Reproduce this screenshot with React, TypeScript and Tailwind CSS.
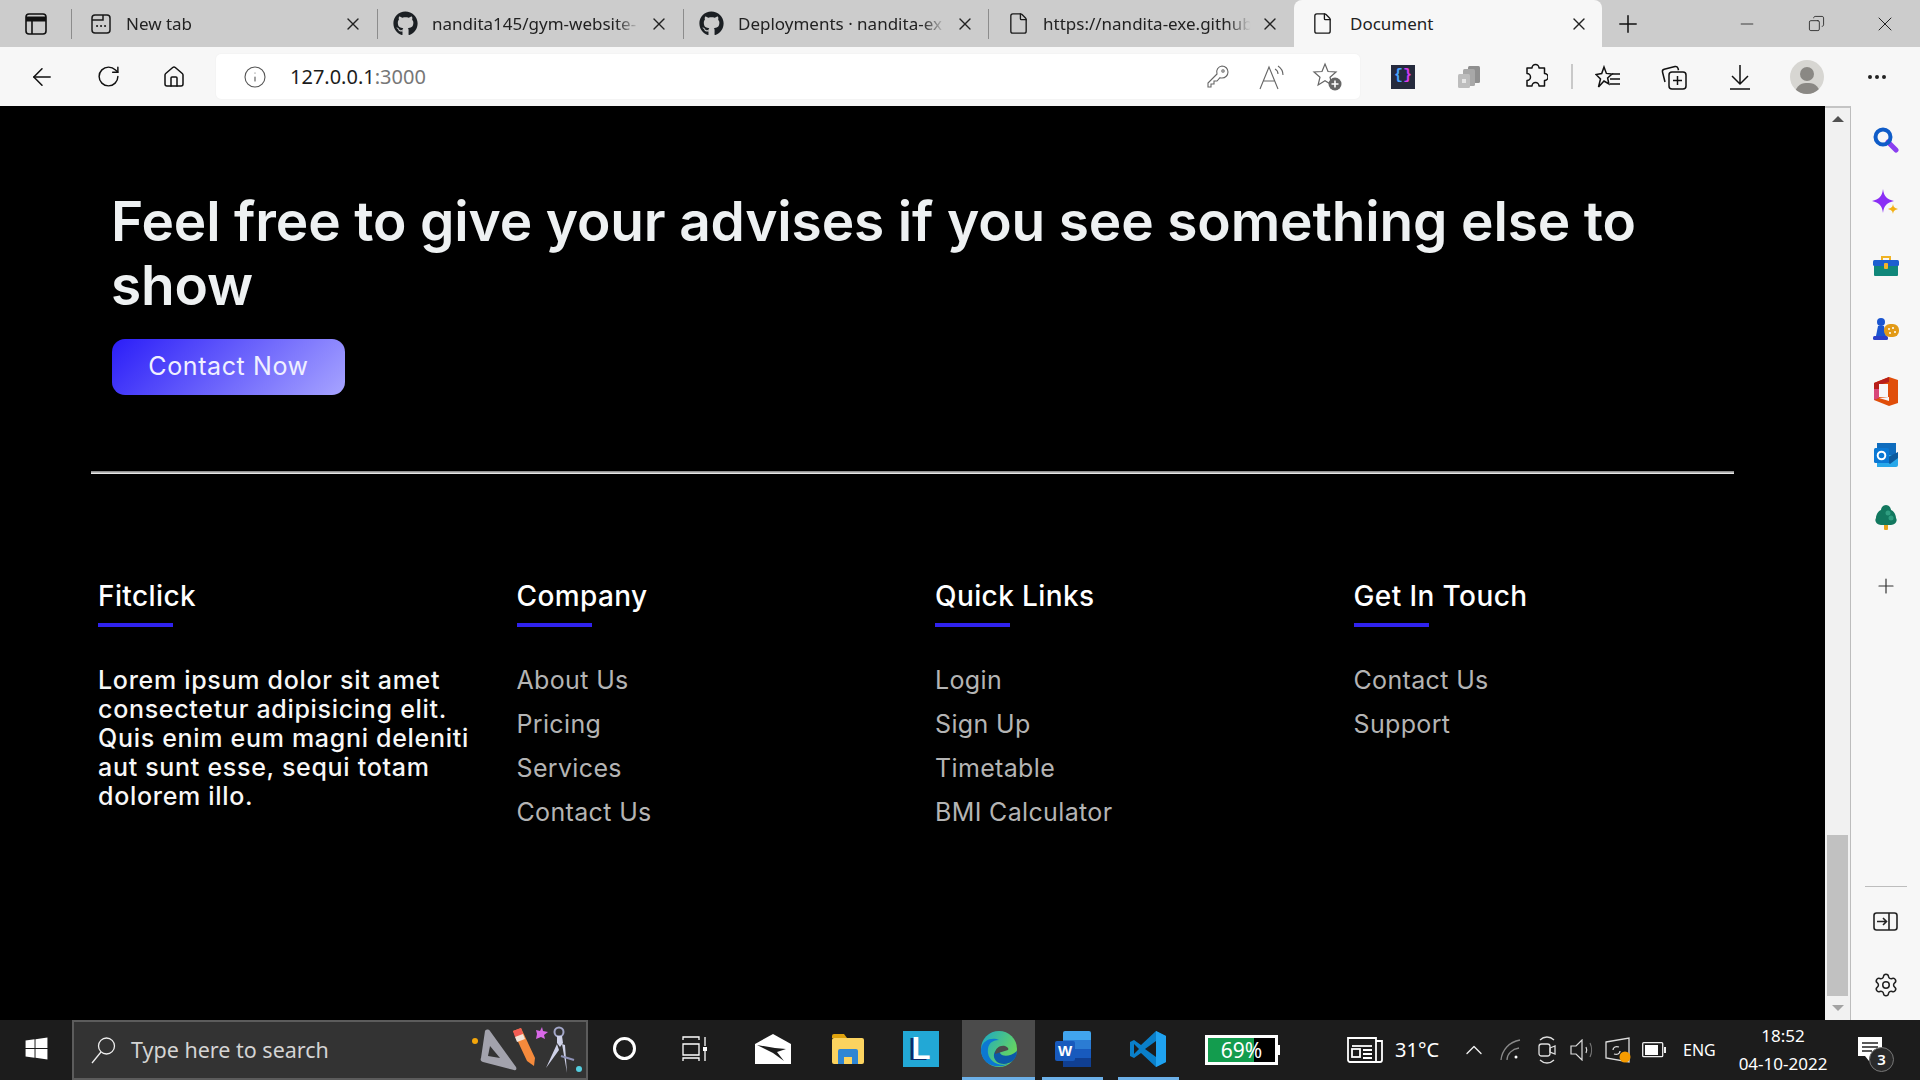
import { ReactNode } from 'react';
import { FaGithub, FaWindows } from 'react-icons/fa';
import {
  ArrowLeft, RotateCw, Home, Info, Plus, Minus, X, Copy, Settings, ChevronUp, File, Ellipsis,
} from 'lucide-react';

const tabs = [
  { id: 'new', title: 'New tab', width: 'w-[306px]' },
  { id: 'gym', title: 'nandita145/gym-website-', width: 'w-[306px]' },
  { id: 'dep', title: 'Deployments · nandita-ex', width: 'w-[305px]' },
  { id: 'url', title: 'https://nandita-exe.github', width: 'w-[306px]' },
];

const footerColumns = [
  { title: 'Company', links: ['About Us', 'Pricing', 'Services', 'Contact Us'] },
  { title: 'Quick Links', links: ['Login', 'Sign Up', 'Timetable', 'BMI Calculator'] },
  { title: 'Get In Touch', links: ['Contact Us', 'Support'] },
];

function TabIcon({ id }: { id: string }) {
  if (id === 'new') {
    return (
      <svg width="22" height="22" viewBox="0 0 22 22" fill="none" stroke="#1a1a1a" strokeWidth="1.5">
        <rect x="2" y="2" width="18" height="18" rx="3" />
        <path d="M2 7h11V2" />
        <path d="M7 13h.1M11 13h.1M15 13h.1" strokeWidth="2" strokeLinecap="round" />
      </svg>
    );
  }
  if (id === 'gym' || id === 'dep') return <FaGithub size={25} color="#1b1f23" className="-translate-x-[2px]" />;
  return <File size={23} strokeWidth={1.4} color="#1a1a1a" />;
}

function Tab({ id, title, width }: { id: string; title: string; width: string }) {
  return (
    <div className={`${width} flex h-[47px] items-center`}>
      <div className="h-[30px] w-px bg-[#8c8c8c]" />
      <div className="flex w-[28px] shrink-0 justify-end">
        <div className="w-[14px]" />
      </div>
      <div className="flex w-[26px] shrink-0 justify-center -ml-[12px] mr-[12px]">
        <TabIcon id={id} />
      </div>
      <span className="w-[214px] overflow-hidden whitespace-nowrap text-[17px] text-[#222] [mask-image:linear-gradient(to_right,black_86%,transparent_97%)]">
        {title}
      </span>
      <X size={20} strokeWidth={1.6} color="#222" className="ml-[3px] shrink-0" />
    </div>
  );
}

function TabStrip() {
  return (
    <div className="flex h-[47px] items-center bg-[#cccccc]">
      <div className="flex w-[71px] justify-center">
        <svg width="24" height="24" viewBox="0 0 24 24" fill="none" stroke="#111" strokeWidth="1.6">
          <rect x="2" y="2" width="20" height="20" rx="3" />
          <path d="M2 7h20" strokeWidth="5" />
          <path d="M8 8v14" />
        </svg>
      </div>
      {tabs.map((t) => (
        <Tab key={t.id} id={t.id} title={t.title} width={t.width} />
      ))}
      <div className="flex h-[47px] w-[308px] items-center rounded-t-[8px] bg-[#f7f7f7]">
        <div className="flex w-[56px] justify-center">
          <File size={23} strokeWidth={1.4} color="#1a1a1a" />
        </div>
        <span className="w-[222px] text-[17px] text-[#222]">Document</span>
        <X size={20} strokeWidth={1.6} color="#222" className="-ml-[3px]" />
      </div>
      <div className="flex w-[52px] justify-center">
        <Plus size={28} strokeWidth={1.3} color="#111" />
      </div>
      <div className="ml-[78px] flex w-[30px] justify-center">
        <Minus size={20} strokeWidth={1} color="#222" />
      </div>
      <div className="ml-[39px] flex w-[30px] justify-center">
        <Copy size={17} strokeWidth={1.2} color="#222" className="-scale-x-100" />
      </div>
      <div className="ml-[39px] flex w-[30px] justify-center">
        <X size={24} strokeWidth={1} color="#222" />
      </div>
    </div>
  );
}

function ToolSlot({ width, children }: { width: string; children: ReactNode }) {
  return <div className={`${width} flex shrink-0 items-center justify-center`}>{children}</div>;
}

function Toolbar() {
  return (
    <div className="flex h-[59px] items-center bg-[#f7f7f7]">
      <ToolSlot width="w-[84px]">
        <ArrowLeft size={28} strokeWidth={1.3} color="#111" />
      </ToolSlot>
      <ToolSlot width="w-[48px]">
        <RotateCw size={25} strokeWidth={1.4} color="#111" />
      </ToolSlot>
      <ToolSlot width="w-[84px]">
        <Home size={24} strokeWidth={1.5} color="#111" />
      </ToolSlot>
      <div className="flex h-[45px] w-[1144px] items-center rounded-[5px] bg-white shadow-[0_0_2px_rgba(0,0,0,0.05)]">
        <ToolSlot width="w-[78px]">
          <Info size={24} strokeWidth={1.1} color="#555" />
        </ToolSlot>
        <span className="-ml-[4px] w-[900px] text-[20px] text-[#1c1c1c]">
          127.0.0.1<span className="text-[#777]">:3000</span>
        </span>
        <ToolSlot width="w-[56px]">
          <svg width="24" height="25" viewBox="0 0 24 25" fill="none" stroke="#666" strokeWidth="1.1">
            <path d="M16 2a6 6 0 0 1 0 12 6 6 0 0 1-2-.3L11 17H8v3H5v3H2v-4l9-9a6 6 0 0 1 5-8z" />
            <circle cx="17" cy="7" r="1.2" />
          </svg>
        </ToolSlot>
        <ToolSlot width="w-[54px]">
          <svg width="30" height="28" viewBox="0 0 30 28" fill="none" stroke="#666" strokeWidth="1.1">
            <path d="M2 26 11 4l9 22M5 18h12" />
            <path d="M17 6c2 1 3 3 3 5M20 3c3 2 5 5 5 9" />
          </svg>
        </ToolSlot>
        <ToolSlot width="w-[54px]">
          <svg width="30" height="29" viewBox="0 0 30 29" fill="none">
            <path d="M13 2l3 7.500 8 .5-6 5.200 1.900 7.800L13 18.800 6.100 23 8 15.200 2 10l8-.5z" stroke="#666" strokeWidth="1.2" />
            <circle cx="23" cy="22" r="6.500" fill="#666" />
            <path d="M23 18.500v7M19.500 22h7" stroke="#fff" strokeWidth="1.600" />
          </svg>
        </ToolSlot>
      </div>
      <div className="w-[10px]" />
      <ToolSlot width="w-[66px]">
        <div className="flex h-[24px] w-[24px] items-center justify-center bg-[#252a3d] text-[15px] font-bold font-['Liberation_Mono',monospace]">
          <span className="text-[#4aa3ff]">{'{'}</span>
          <span className="text-[#d63cf0]">{'}'}</span>
        </div>
      </ToolSlot>
      <ToolSlot width="w-[66px]">
        <svg width="24" height="24" viewBox="0 0 24 24">
          <rect x="11" y="1" width="12" height="17" rx="1.5" fill="#8f8f8f" />
          <rect x="6" y="4" width="12" height="17" rx="1.5" fill="#a8a8a8" />
          <rect x="1" y="9" width="12" height="14" rx="1.5" fill="#bdbdbd" />
          <rect x="5" y="14" width="4" height="4" fill="#e6e6e6" />
        </svg>
      </ToolSlot>
      <ToolSlot width="w-[67px]">
        <svg width="25" height="27" viewBox="0 0 25 27" fill="none" stroke="#111" strokeWidth="1.500" strokeLinejoin="round">
          <path d="M9 5a3.500 3.500 0 0 1 7 0h5.500v5.500a3.500 3.500 0 0 1 0 7V23H16a3.500 3.500 0 0 0-7 0H4v-5.500a3.500 3.500 0 0 0 0-7V5z" />
        </svg>
      </ToolSlot>
      <div className="mx-[2px] h-[25px] w-[2px] bg-[#c9c9c9]" />
      <ToolSlot width="w-[66px]">
        <svg width="26" height="24" viewBox="0 0 26 24" fill="none" stroke="#111" strokeWidth="1.5">
          <path d="M9 2l2.4 6.4L17 9l-4.4 4 1.3 6L9 16l-5.500 6 2-8L1 9.500l5.700-1z" />
          <path d="M17 9h8M15 14h10M15 19h10" />
        </svg>
      </ToolSlot>
      <ToolSlot width="w-[66px]">
        <svg width="26" height="26" viewBox="0 0 26 26" fill="none" stroke="#111" strokeWidth="1.5">
          <path d="M4 18 1.500 8c-.3-1.300.4-2.500 1.700-2.800L14 2.500c1.300-.3 2.400.3 3 1.700l.5 2" />
          <rect x="8" y="8" width="17" height="17" rx="3" />
          <path d="M16.500 12v9M12 16.500h9" />
        </svg>
      </ToolSlot>
      <ToolSlot width="w-[66px]">
        <svg width="22" height="26" viewBox="0 0 22 26" fill="none" stroke="#111" strokeWidth="1.500">
          <path d="M11 1v19M3 12l8 8 8-8M1 25h20" />
        </svg>
      </ToolSlot>
      <ToolSlot width="w-[68px]">
        <div className="flex h-[34px] w-[34px] flex-col items-center justify-end overflow-hidden rounded-full bg-[#d7d6d2]">
          <div className="mb-[2px] h-[14px] w-[14px] rounded-full bg-[#8a8884]" />
          <div className="h-[11px] w-[25px] rounded-t-full bg-[#8a8884]" />
        </div>
      </ToolSlot>
      <ToolSlot width="w-[72px]">
        <Ellipsis size={24} strokeWidth={2} color="#222" />
      </ToolSlot>
    </div>
  );
}

function FooterHeading({ title }: { title: string }) {
  return (
    <div>
      <h3 className="text-[28px] leading-[36px] font-medium tracking-[0.4px] text-white">{title}</h3>
      <div className="mt-[9px] h-[4px] w-[75px] bg-[#2f22ee]" />
    </div>
  );
}

function Page() {
  return (
    <div className="h-[914px] w-[1825px] bg-black pt-[83px] font-['Inter',sans-serif]">
      <div className="pl-[111px]">
        <h1 className="w-[1600px] text-[55px] leading-[64px] font-semibold tracking-[-0.15px] text-[#eef1f2]">
          Feel free to give your advises if you see something else to
          <br />
          show
        </h1>
        <button className="ml-[1px] mt-[22px] h-[56px] w-[233px] rounded-[13px] bg-[linear-gradient(135deg,#2b1ef8,#a7a4ff)] text-[25px] font-normal tracking-[0.6px] text-[#f0f0ff]">
          Contact Now
        </button>
      </div>
      <div className="ml-[91px] mt-[76px] h-[3px] w-[1643px] border-t border-b border-t-[#8f8f8f] border-b-[#e8e8e8] bg-[#b5b5b5]" />
      <div className="ml-[98px] mt-[104px] grid w-[1674px] grid-cols-4">
        <div>
          <FooterHeading title="Fitclick" />
          <p className="mt-[39px] text-[25px] leading-[29px] font-medium tracking-[0.7px] text-[#f7f7f7]">
            Lorem ipsum dolor sit amet
            <br />
            consectetur adipisicing elit.
            <br />
            Quis enim eum magni deleniti
            <br />
            aut sunt esse, sequi totam
            <br />
            dolorem illo.
          </p>
        </div>
        {footerColumns.map((col) => (
          <div key={col.title}>
            <FooterHeading title={col.title} />
            <ul className="mt-[39px] flex flex-col gap-[15px]">
              {col.links.map((link) => (
                <li key={link} className="text-[25px] leading-[29px] tracking-[0.35px] text-[#b4b4b4]">
                  {link}
                </li>
              ))}
            </ul>
          </div>
        ))}
      </div>
    </div>
  );
}

function Scrollbar() {
  return (
    <div className="flex h-[914px] w-[26px] flex-col border-r border-t-2 border-r-[#bdbdbd] border-t-[#c4c4c4] bg-[#f1f1f1]">
      <div className="mt-[8px] h-0 w-0 self-center border-x-[6px] border-b-[6px] border-x-transparent border-b-[#505050]" />
      <div className="mx-[2px] mt-[713px] h-[161px] w-[21px] bg-[#c1c1c1]" />
      <div className="mt-[9px] h-0 w-0 self-center border-x-[6px] border-t-[6px] border-x-transparent border-t-[#a3a3a3]" />
    </div>
  );
}

function SideSlot({ children }: { children: ReactNode }) {
  return <div className="flex h-[63px] items-center justify-center">{children}</div>;
}

function SidePanel() {
  return (
    <div className="flex h-[914px] w-[69px] flex-col bg-[#f7f7f7] pt-[2px]">
      <SideSlot>
        <svg width="26" height="26" viewBox="0 0 26 26" fill="none">
          <path d="M15 15l8 8" stroke="#8a3ff0" strokeWidth="5" strokeLinecap="round" />
          <circle cx="10" cy="10" r="7.500" stroke="#0f5cc8" strokeWidth="4" />
        </svg>
      </SideSlot>
      <SideSlot>
        <svg width="28" height="28" viewBox="0 0 28 28">
          <path d="M11 0c1 8 4 10 11 12-7 2-10 4-11 12C10 16 7 14 0 12c7-2 10-4 11-12z" fill="#8a2ef5" />
          <path d="M21 15c.5 3 1.500 4 5 5-3.500 1-4.500 2-5 5-.5-3-1.500-4-5-5 3.500-1 4.500-2 5-5z" fill="#f3b014" />
        </svg>
      </SideSlot>
      <SideSlot>
        <svg width="26" height="22" viewBox="0 0 26 22">
          <path d="M9 5V2h8v3" fill="none" stroke="#f0b323" strokeWidth="2" />
          <rect x="1" y="9" width="24" height="12" rx="1" fill="#10877a" />
          <rect x="0" y="5" width="26" height="6" rx="1.500" fill="#1d5fd0" />
          <rect x="11" y="8" width="4" height="6" rx="1" fill="#f2b42a" />
        </svg>
      </SideSlot>
      <SideSlot>
        <svg width="28" height="24" viewBox="0 0 28 24">
          <circle cx="9" cy="5" r="4" fill="#1a55d0" />
          <path d="M6 9h6l2 10H4z" fill="#1a55d0" />
          <rect x="1" y="19" width="15" height="4" rx="1.500" fill="#2b3fc9" />
          <rect x="12" y="7" width="15" height="13" rx="6" fill="#e29a17" />
          <circle cx="17" cy="12" r="1" fill="#fff" />
          <circle cx="21" cy="11" r="1" fill="#fff" />
          <circle cx="23" cy="15" r="1" fill="#fff" />
          <circle cx="18" cy="16" r="1" fill="#fff" />
        </svg>
      </SideSlot>
      <SideSlot>
        <svg width="24" height="29" viewBox="0 0 24 29">
          <path d="M15 0 0 6v17l15 6 9-3V3z" fill="#e04e0a" />
          <path d="M15 0 0 6v17l5-2V8l10-3z" fill="#b81f1a" />
          <path d="M0 12v11l5-2v-9z" fill="#d9477a" />
          <path d="M5 21l10 3v-4z" fill="#f7f7f7" />
          <rect x="5" y="7" width="9" height="13" fill="#f7f7f7" />
        </svg>
      </SideSlot>
      <SideSlot>
        <svg width="24" height="24" viewBox="0 0 24 24">
          <rect x="3" y="0" width="19" height="12" fill="#0f6cbd" />
          <path d="M3 12h21v10a2 2 0 0 1-2 2H3z" fill="#28a8ea" />
          <path d="M10 16l14-7v6l-8 6z" fill="#0b5a9e" />
          <rect x="0" y="5" width="15" height="15" rx="1.500" fill="#0a78d4" />
          <circle cx="7.500" cy="12.500" r="3.800" fill="none" stroke="#fff" strokeWidth="2" />
        </svg>
      </SideSlot>
      <SideSlot>
        <svg width="24" height="25" viewBox="0 0 24 25">
          <rect x="10" y="18" width="4" height="7" rx="1" fill="#e9a31c" />
          <path d="M12 0c3 0 5 3 5 5 3 1 5 5 5 8 2 3-1 7-5 7H7c-4 0-7-4-5-7 0-3 2-7 5-8 0-2 2-5 5-5z" fill="#12785f" />
          <circle cx="14" cy="8" r="2.500" fill="#2f9d80" />
          <circle cx="17" cy="13" r="2.500" fill="#2f9d80" />
        </svg>
      </SideSlot>
      <div className="mt-[5px]">
        <SideSlot>
          <Plus size={24} strokeWidth={1.2} color="#333" />
        </SideSlot>
      </div>
      <div className="mt-[269px] h-px w-[42px] self-center bg-[#bdbdbd]" />
      <div className="flex h-[70px] items-center justify-center">
        <svg width="25" height="20" viewBox="0 0 25 20" fill="none" stroke="#222" strokeWidth="1.600">
          <rect x="1" y="1" width="23" height="17" rx="2.500" />
          <path d="M16 1v17M4 9.500h9M10 6l3.500 3.500L10 13" />
        </svg>
      </div>
      <div className="flex h-[56px] items-center justify-center">
        <Settings size={26} strokeWidth={1.4} color="#222" />
      </div>
    </div>
  );
}

function SearchArt() {
  return (
    <svg width="112" height="56" viewBox="0 0 112 56" className="shrink-0">
      <circle cx="4" cy="19" r="3" fill="#f4a60a" />
      <path d="M14 9c1-2 4-2 5 0l26 36c1 2 0 4-2 3L12 40c-2-1-3-2-2-4z" fill="#a3a3ad" />
      <path d="M19 24l10 12-12-2z" fill="#333" />
      <path d="M42 9l8-3 14 30-1 8-7-5z" fill="#f58a3c" />
      <path d="M42 9l8-3 2 6-8 3z" fill="#f25c54" />
      <path d="M44 15l8-3 2 5-8 3z" fill="#f3e4da" />
      <path d="M71 5l1 4 5 1-4 3 1 4-4-2-5 2 1-5-1-4 4 1z" fill="#d968e8" />
      <circle cx="88" cy="10" r="4.500" fill="none" stroke="#a2a6c8" strokeWidth="2" />
      <path d="M86 14h5l1 7-3 4-3-4zM86 22l-11 24 13-18zM91 22l5 29-2-28z" fill="#cfd2e8" />
      <path d="M90 34l13 4" stroke="#8f93b8" strokeWidth="2" />
      <circle cx="108" cy="47" r="3" fill="#54cfe0" />
    </svg>
  );
}

function TaskSlot({ width, active, bar, children }: { width: string; active?: boolean; bar?: string; children: ReactNode }) {
  return (
    <div className={`${width} ${active ? 'bg-[#4b4b4b]' : ''} flex h-[60px] shrink-0 flex-col items-center`}>
      <div className="flex h-[57px] w-full items-center justify-center">{children}</div>
      {bar && <div className={`${bar} h-[3px] bg-[#6cb0e8]`} />}
    </div>
  );
}

function Taskbar() {
  return (
    <div className="flex h-[60px] w-[1920px] items-center bg-[#1c1c1c] text-white font-['Noto_Sans',sans-serif]">
      <TaskSlot width="w-[72px]">
        <FaWindows size={25} color="#fff" />
      </TaskSlot>
      <div className="flex h-[60px] w-[516px] shrink-0 items-center border-2 border-[#5c5c5c] bg-[#333333]">
        <svg width="25" height="28" viewBox="0 0 25 28" fill="none" stroke="#eee" strokeWidth="1.300" className="ml-[17px] shrink-0">
          <circle cx="15.500" cy="10" r="8" />
          <path d="M10 16 1 27" />
        </svg>
        <span className="ml-[15px] w-[340px] shrink-0 whitespace-nowrap text-[21.500px] text-[#d4d4d4]">Type here to search</span>
        <SearchArt />
      </div>
      <TaskSlot width="w-[72px]">
        <div className="h-[23px] w-[23px] rounded-full border-[3.500px] border-white" />
      </TaskSlot>
      <TaskSlot width="w-[70px]">
        <svg width="26" height="26" viewBox="0 0 26 26" fill="none" stroke="#fff" strokeWidth="1.300">
          <path d="M1 4V1h16v3M1 8h16v11H1zM1 25v-3h16v3M23 1v9M23 15v10" />
          <rect x="21" y="11" width="4" height="4" fill="#fff" stroke="none" />
        </svg>
      </TaskSlot>
      <TaskSlot width="w-[86px]">
        <svg width="36" height="30" viewBox="0 0 36 30">
          <path d="M0 10 18 0l18 10v20H0z" fill="#fff" />
          <path d="M2 11l18 3 11 1-9 3 7 9-11-8z" fill="#1c1c1c" />
        </svg>
      </TaskSlot>
      <TaskSlot width="w-[64px]">
        <svg width="32" height="30" viewBox="0 0 32 30">
          <path d="M0 2a2 2 0 0 1 2-2h10l3 4H0z" fill="#e0a30d" />
          <rect x="0" y="4" width="32" height="26" rx="2" fill="#fbd35f" />
          <path d="M6 30V17a2 2 0 0 1 2-2h16a2 2 0 0 1 2 2v13h-6v-7h-8v7z" fill="#2f86d4" />
        </svg>
      </TaskSlot>
      <TaskSlot width="w-[82px]">
        <div className="flex h-[36px] w-[36px] items-center justify-center bg-[#22a8d6] text-[31px] leading-none font-bold font-['Liberation_Sans',sans-serif] text-white [text-shadow:-3px_1px_0_#0b2a6b]">
          L
        </div>
      </TaskSlot>
      <TaskSlot width="w-[73px]" active bar="w-full">
        <svg width="36" height="36" viewBox="0 0 36 36">
          <defs>
            <linearGradient id="edgeTop" x1="0" y1="0" x2="1" y2="0.600">
              <stop offset="0" stopColor="#1aa6c8" />
              <stop offset="1" stopColor="#6bd85a" />
            </linearGradient>
          </defs>
          <circle cx="18" cy="18" r="18" fill="url(#edgeTop)" />
          <path d="M0 18C2 8 12 6 18 9c-8 0-12 5-11 13 1 8 10 14 20 11-8 5-27 3-27-15z" fill="#0c78d2" />
          <path d="M36 20c0 8-6 13-13 13-7 0-11-5-10-10 1-5 8-8 10-5-3 0-5 2-4 4 1 3 9 5 17-2z" fill="#0c59a8" />
          <path d="M14 23c0-6 5-9 10-8 3 1 4 3 3 4l-13 4z" fill="#4b4b4b" />
        </svg>
      </TaskSlot>
      <TaskSlot width="w-[75px]" bar="w-[61px]">
        <svg width="36" height="36" viewBox="0 0 36 36">
          <rect x="8" y="0" width="28" height="36" rx="2" fill="#41a5ee" />
          <rect x="8" y="9" width="28" height="9" fill="#2b7cd3" />
          <rect x="8" y="18" width="28" height="9" fill="#185abd" />
          <rect x="8" y="27" width="28" height="9" fill="#103f91" />
          <rect x="0" y="10" width="20" height="20" rx="2" fill="#185abd" />
          <text x="10" y="25" textAnchor="middle" fontSize="15" fontWeight="700" fill="#fff" fontFamily="Liberation Sans">W</text>
        </svg>
      </TaskSlot>
      <TaskSlot width="w-[76px]" bar="w-[61px]">
        <svg width="36" height="36" viewBox="0 0 36 36">
          <path d="M26 0l10 5v26l-10 5-15-14-7 5-4-2V11l4-2 7 5z" fill="#0a7fc9" />
          <path d="M26 0l10 5v26l-10 5z" fill="#1fa2f0" />
          <path d="M26 10 15 18l11 8z" fill="#1c1c1c" />
          <path d="M4 13v10l5-5z" fill="#1c1c1c" />
        </svg>
      </TaskSlot>
      <div className="ml-[19px] flex h-[30px] w-[73px] shrink-0 items-stretch border-[3px] border-white bg-black">
        <div className="relative w-full">
          <div className="h-full w-[69%] bg-[#139c4e]" />
          <span className="absolute inset-0 flex items-center justify-center text-[21px] leading-none text-white">69%</span>
        </div>
      </div>
      <div className="h-[10px] w-[2px] shrink-0 bg-white" />
      <div className="ml-[66px] flex w-[38px] shrink-0 justify-center">
        <svg width="36" height="28" viewBox="0 0 36 28" fill="none" stroke="#fff" strokeWidth="1.800">
          <path d="M1 2h28v24H3a2 2 0 0 1-2-2zM29 5h6v19a2 2 0 0 1-2 2h-4" />
          <path d="M5 10h20" />
          <rect x="5" y="13" width="8" height="8" />
          <path d="M16 14h9M16 18h9M16 22h9" />
        </svg>
      </div>
      <span className="ml-[11px] w-[45px] shrink-0 text-[20px]">31°C</span>
      <div className="ml-[16px] flex w-[36px] shrink-0 justify-center">
        <ChevronUp size={28} strokeWidth={1.2} color="#eee" />
      </div>
      <div className="flex w-[38px] shrink-0 justify-center">
        <svg width="22" height="22" viewBox="0 0 22 22" fill="none" stroke="#8a8a8a" strokeWidth="1.300">
          <path d="M1 21C2 11 9 3 20 1M7 21c0-6 5-11 12-12" />
          <circle cx="16" cy="18" r="1.500" fill="#fff" stroke="none" />
        </svg>
      </div>
      <div className="flex w-[34px] shrink-0 justify-center">
        <svg width="20" height="28" viewBox="0 0 20 28" fill="none" stroke="#ddd" strokeWidth="1.300">
          <path d="M3 4c4-4 10-4 14 0M3 24c4 4 10 4 14 0" />
          <rect x="2" y="8" width="11" height="12" rx="2.500" />
          <path d="M13 12l5-2v8l-5-2z" />
        </svg>
      </div>
      <div className="flex w-[36px] shrink-0 justify-center">
        <svg width="24" height="22" viewBox="0 0 24 22" fill="none" stroke="#ddd" strokeWidth="1.200">
          <path d="M1 7h5l6-6v20l-6-6H1z" />
          <path d="M16 8c1 2 1 4 0 6" />
          <path d="M20 4c2 4 2 10 0 14" stroke="#777" />
        </svg>
      </div>
      <div className="flex w-[36px] shrink-0 justify-center">
        <svg width="26" height="26" viewBox="0 0 26 26" fill="none">
          <path d="M1 5 24 1v24L1 21z" stroke="#ddd" strokeWidth="1.300" />
          <path d="M8 13c0-3 3-4 6-3M15 14c0 3-3 4-6 3" stroke="#ddd" strokeWidth="1.300" />
          <circle cx="20" cy="20" r="5.500" fill="#f59b00" />
        </svg>
      </div>
      <div className="flex w-[36px] shrink-0 justify-center">
        <svg width="24" height="16" viewBox="0 0 24 16">
          <rect x="0.700" y="0.700" width="20" height="14" rx="1" fill="none" stroke="#eee" strokeWidth="1.300" />
          <rect x="3" y="3" width="13" height="10" fill="#fff" />
          <rect x="22" y="5" width="2" height="6" fill="#eee" />
        </svg>
      </div>
      <span className="ml-[11px] w-[33px] shrink-0 text-[16px]">ENG</span>
      <div className="flex w-[134px] shrink-0 flex-col items-center text-[17px] leading-[28px]">
        <span>18:52</span>
        <span>04-10-2022</span>
      </div>
      <div className="relative flex w-[40px] shrink-0 justify-center">
        <svg width="26" height="28" viewBox="0 0 26 28">
          <path d="M1 1h24v19H13l-1 5-4-5H1z" fill="#fff" />
          <path d="M5 7h16M5 11h16M5 15h10" stroke="#222" strokeWidth="1.500" />
        </svg>
        <span className="absolute left-[19px] top-[11px] flex h-[25px] w-[25px] items-center justify-center rounded-full border border-[#777] bg-[#2a2a2a] text-[15px] font-semibold">
          3
        </span>
      </div>
    </div>
  );
}

export default function App() {
  return (
    <div className="flex h-[1080px] w-[1920px] flex-col overflow-hidden font-['Noto_Sans',sans-serif]">
      <TabStrip />
      <Toolbar />
      <div className="flex">
        <Page />
        <Scrollbar />
        <SidePanel />
      </div>
      <Taskbar />
    </div>
  );
}
